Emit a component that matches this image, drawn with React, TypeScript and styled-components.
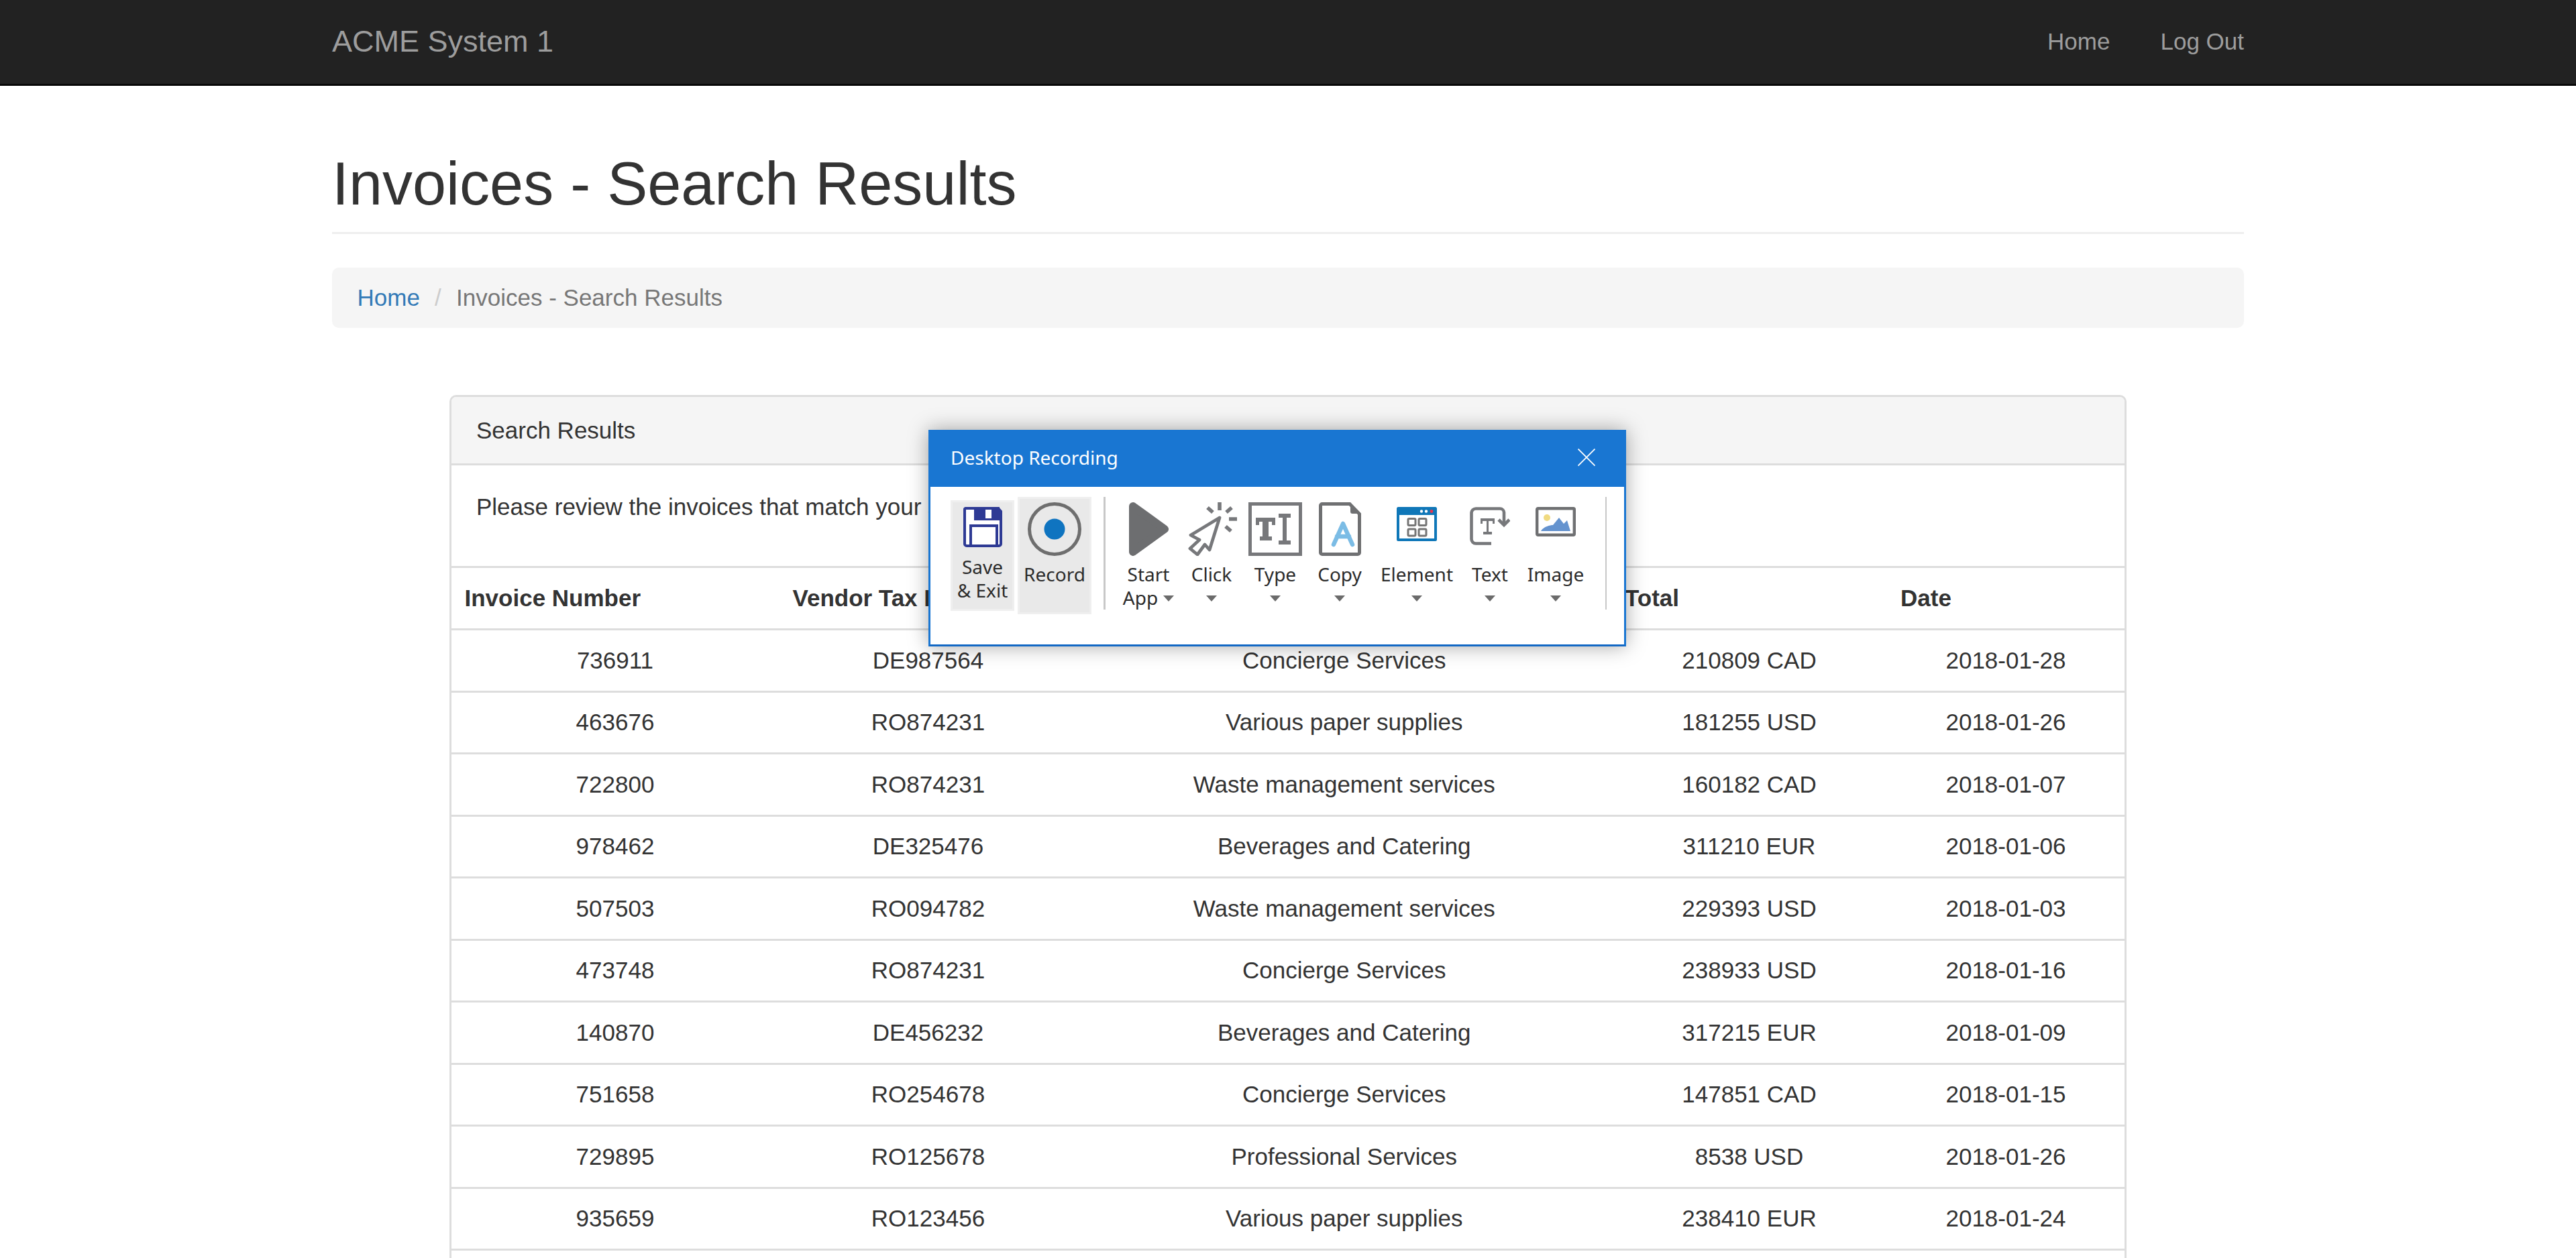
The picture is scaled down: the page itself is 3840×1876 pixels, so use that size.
import React from "react";
import styled, { createGlobalStyle } from "styled-components";

const Global = createGlobalStyle`
  html, body { margin: 0; padding: 0; height: 100%; overflow: hidden; background: #fff; }
  * { box-sizing: border-box; }
`;

const Page = styled.div`
  zoom: 2.5;
  width: 1536px;
  font-family: "Liberation Sans", Arial, sans-serif;
  font-size: 14px;
  line-height: 20px;
  color: #333;
`;
const Navbar = styled.nav`
  height: 51.2px;
  background: #222;
  border-bottom: 1.2px solid #080808;
`;
const NavInner = styled.div`
  width: 1170px;
  height: 49.6px;
  margin: 0 auto;
  padding: 0 15px;
  display: flex;
  align-items: center;
  justify-content: space-between;
  color: #9d9d9d;
`;
const Brand = styled.a`
  font-size: 18px;
  line-height: 20px;
  color: #9d9d9d;
`;
const NavLinks = styled.div`
  display: flex;
  gap: 30px;
`;
const NavLink = styled.a`
  color: #9d9d9d;
`;
const Container = styled.main`
  width: 1170px;
  margin: 0 auto;
  padding: 0 15px;
`;
const Header = styled.h1`
  margin: 38.6px 0 20px;
  padding-bottom: 9px;
  border-bottom: 1.2px solid #eee;
  font-size: 36px;
  font-weight: 500;
  line-height: 1.1;
  color: #333;
`;
const Breadcrumb = styled.ol`
  display: flex;
  list-style: none;
  margin: 0 0 40px;
  padding: 8px 15px;
  background: #f5f5f5;
  border-radius: 4px;
`;
const Crumb = styled.li`
  color: #777;
`;
const CrumbLink = styled.a`
  color: #337ab7;
`;
const CrumbSep = styled.li`
  color: #ccc;
  padding: 0 5px;
  white-space: pre;
`;
const Panel = styled.section`
  width: 1000px;
  margin: 0 auto;
  border: 1.2px solid #ddd;
  border-radius: 4px;
  overflow: hidden;
`;
const PanelHeading = styled.div`
  padding: 9.8px 15px 9.8px 14.8px;
  background: #f5f5f5;
  border-bottom: 1.2px solid #ddd;
`;
const PanelBody = styled.div`
  padding: 14.8px 15px 15.2px 14.8px;
`;
const Lead = styled.p`
  margin: 0 0 10px;
`;
const Table = styled.table`
  width: calc(100% + 0.2px);
  margin-left: -0.2px;
  table-layout: fixed;
  border-collapse: separate;
  border-spacing: 0;
`;
const Th = styled.th`
  padding: 8px;
  text-align: left;
  font-weight: 700;
  border-top: 1.2px solid #ddd;
  white-space: nowrap;
`;
const Td = styled.td`
  padding: 7.8px 8px 8px;
  text-align: center;
  border-top: 1.2px solid #ddd;
`;

const Popup = styled.aside`
  position: absolute;
  left: 1384px;
  top: 641px;
  width: 1040px;
  height: 323px;
  background: #fff;
  border: 3px solid #1976d2;
  border-bottom-color: #1268c4;
  box-shadow: 0 0 28px rgba(0, 0, 0, 0.35);
  font-family: "Noto Sans", "Open Sans", sans-serif;
  color: #2b2b2b;
  display: flex;
  flex-direction: column;
`;
const TitleBar = styled.header`
  height: 82px;
  flex: none;
  background: #1976d2;
  color: #fff;
  font-size: 28px;
  display: flex;
  align-items: center;
  justify-content: space-between;
  padding: 0 43px 6px 30px;
`;
const Toolbar = styled.div`
  display: flex;
  align-items: flex-start;
  padding: 15px 0 0 30px;
`;
const ActionButton = styled.div<{ $w: number; $h: number; $pad: number; $top: number }>`
  width: ${(p) => p.$w}px;
  height: ${(p) => p.$h}px;
  margin: ${(p) => p.$top}px 5px 0 0;
  padding-top: ${(p) => p.$pad}px;
  background: #e9e9e9;
  border: 3px solid #efefef;
  display: flex;
  flex-direction: column;
  align-items: center;
  flex: none;
`;
const Label = styled.div<{ $gap?: number }>`
  font-size: 28px;
  line-height: 35px;
  margin-top: ${(p) => p.$gap ?? 0}px;
  text-align: center;
  white-space: nowrap;
`;
const Separator = styled.div<{ $left: number; $w: number }>`
  width: ${(p) => p.$w}px;
  height: 168px;
  margin-left: ${(p) => p.$left}px;
  background: #c8c8c8;
  flex: none;
`;
const Tools = styled.div`
  display: flex;
  margin-left: 16px;
  height: 168px;
`;
const Tool = styled.div<{ $w: number }>`
  width: ${(p) => p.$w}px;
  padding-top: 8px;
  display: flex;
  flex-direction: column;
  align-items: center;
  flex: none;
`;
const IconSlot = styled.div<{ $top?: number }>`
  height: 80px;
  padding-top: ${(p) => p.$top ?? 0}px;
  display: flex;
  align-items: flex-start;
  justify-content: center;
  flex: none;
`;
const CaretLine = styled.div`
  height: 35px;
  display: flex;
  align-items: center;
  justify-content: center;
  gap: 8px;
  font-size: 28px;
  line-height: 35px;
`;
const Caret = styled.span`
  display: block;
  width: 0;
  height: 0;
  margin-top: 1px;
  border-left: 8px solid transparent;
  border-right: 8px solid transparent;
  border-top: 9px solid #6b6b6b;
`;
const Svg = styled.svg`
  display: block;
  flex: none;
`;
const ClickSvg = styled(Svg)`
  margin-left: 8px;
`;

const rows = [
  ["736911", "DE987564", "Concierge Services", "210809 CAD", "2018-01-28"],
  ["463676", "RO874231", "Various paper supplies", "181255 USD", "2018-01-26"],
  ["722800", "RO874231", "Waste management services", "160182 CAD", "2018-01-07"],
  ["978462", "DE325476", "Beverages and Catering", "311210 EUR", "2018-01-06"],
  ["507503", "RO094782", "Waste management services", "229393 USD", "2018-01-03"],
  ["473748", "RO874231", "Concierge Services", "238933 USD", "2018-01-16"],
  ["140870", "DE456232", "Beverages and Catering", "317215 EUR", "2018-01-09"],
  ["751658", "RO254678", "Concierge Services", "147851 CAD", "2018-01-15"],
  ["729895", "RO125678", "Professional Services", "8538 USD", "2018-01-26"],
  ["935659", "RO123456", "Various paper supplies", "238410 EUR", "2018-01-24"],
];
const colWidths = [195.6, 177.6, 318.6, 164.4, 141.6];
const headers = ["Invoice Number", "Vendor Tax ID", "Description", "Total", "Date"];

const G = "#77787b";

const SaveIcon = () => (
  <Svg width={58} height={60} viewBox="0 0 58 60">
    <path d="M3 2h49l4 4.5V55a3 3 0 0 1-3 3H5a3 3 0 0 1-3-3V3z" fill="#fff" stroke="#2e3a94" strokeWidth="4" strokeLinejoin="round" />
    <path d="M16 0h38v20H16z" fill="#2e3a94" />
    <path d="M33 4h9v13h-9z" fill="#fff" />
    <path d="M11 58V28h39v30" fill="none" stroke="#2e3a94" strokeWidth="4" />
  </Svg>
);
const RecordIcon = () => (
  <Svg width={80} height={80} viewBox="0 0 80 80">
    <circle cx="40" cy="40" r="37.5" fill="none" stroke="#6e6e6e" strokeWidth="5" />
    <circle cx="40" cy="40" r="15.5" fill="#0f74c0" />
  </Svg>
);
const PlayIcon = () => (
  <Svg width={59} height={80} viewBox="0 0 59 80">
    <path d="M6 6 53 40 6 74Z" fill="#6d6e70" stroke="#6d6e70" strokeWidth="12" strokeLinejoin="round" />
  </Svg>
);
const ClickIcon = () => (
  <ClickSvg width={80} height={80} viewBox="10 9 80 80" fill="none" stroke={G}>
    <path d="M58 32 15 58l13 7-14 13 11 9 11-15 7 8Z" strokeWidth="4.8" strokeLinejoin="round" />
    <path d="M58 9v12M40 17l8 7M76 17l-8 7M72 34h12M67 45l8 7" strokeWidth="5.6" />
  </ClickSvg>
);
const TypeIcon = () => (
  <Svg width={80} height={80} viewBox="0 0 80 80" fill={G}>
    <path fillRule="evenodd" d="M0 0h80v80H0Zm5 5v70h70V5Z" />
    <path d="M11 23h29v11h-5v-5h-5v22h5v6H17v-6h4V29h-5v5h-5Z" />
    <path d="M45 17h18v6h-6v34h6v6H45v-6h6V23h-6Z" />
  </Svg>
);
const CopyIcon = () => (
  <Svg width={63} height={80} viewBox="0 0 63 80" fill="none">
    <path d="M5 2.500h41l14.500 15V75a2.500 2.500 0 0 1-2.500 2.500H5A2.500 2.500 0 0 1 2.500 75V5A2.500 2.500 0 0 1 5 2.500Z" stroke="#6f7072" strokeWidth="5" />
    <path d="M47 1 62 16v1H50a3 3 0 0 1-3-3Z" fill="#6f7072" />
    <path d="M22 63 36 32l14 31M27 51h18" stroke="#7bbce5" strokeWidth="6.5" strokeLinecap="round" strokeLinejoin="round" />
  </Svg>
);
const ElementIcon = () => (
  <Svg width={60} height={51} viewBox="0 0 60 51">
    <rect width="60" height="51" rx="2.500" fill="#0f77b8" />
    <rect x="4" y="12" width="52" height="35" fill="#fff" />
    <circle cx="37" cy="6.500" r="2.200" fill="#fff" />
    <circle cx="44" cy="6.500" r="2.200" fill="#fff" />
    <circle cx="52" cy="6.500" r="2.400" fill="#e8354f" />
    <g fill="none" stroke="#757575" strokeWidth="3">
      <rect x="17" y="17.500" width="11" height="10" rx="1.500" />
      <rect x="33" y="17.500" width="11" height="10" rx="1.500" />
      <rect x="17" y="33" width="11" height="10" rx="1.500" />
      <rect x="33" y="33" width="11" height="10" rx="1.500" />
    </g>
  </Svg>
);
const TextIcon = () => (
  <Svg width={60} height={57} viewBox="0 0 60 57">
    <path d="M32 54.500H9a6.500 6.500 0 0 1-6.500-6.500V9A6.500 6.500 0 0 1 9 2.500h36a6 6 0 0 1 6 6V25" fill="none" stroke={G} strokeWidth="4.600" />
    <path d="M43 19l8 8 8-8" fill="none" stroke={G} strokeWidth="4.600" />
    <path d="M16 17h21v8h-3v-4h-6v16h5v4H20v-4h5V21h-6v4h-3Z" fill={G} />
  </Svg>
);
const ImageIcon = () => (
  <Svg width={60} height={44} viewBox="0 0 60 44">
    <rect x="2.200" y="2.200" width="55.600" height="39.600" rx="1.500" fill="#fff" stroke="#6f7072" strokeWidth="4.400" />
    <circle cx="17" cy="16" r="5" fill="#f0da80" />
    <path d="M8 36c4-7 14-9 18-9l9-11 7 9 5-5 5 16Z" fill="#6493cf" />
  </Svg>
);
const CloseIcon = () => (
  <Svg width={26} height={26} viewBox="0 0 26 26">
    <path d="M.5.500 25.500 25.500M25.500.500.500 25.500" stroke="#fff" strokeWidth="1.800" />
  </Svg>
);

const tools = [
  { w: 92, label: "Click", icon: <ClickIcon /> },
  { w: 98, label: "Type", icon: <TypeIcon /> },
  { w: 94, label: "Copy", icon: <CopyIcon /> },
  { w: 136, label: "Element", icon: <ElementIcon />, top: 7 },
  { w: 82, label: "Text", icon: <TextIcon />, top: 7 },
  { w: 114, label: "Image", icon: <ImageIcon />, top: 7 },
];

export default function App() {
  return (
    <>
      <Global />
      <Page>
        <Navbar>
          <NavInner>
            <Brand>ACME System 1</Brand>
            <NavLinks>
              <NavLink>Home</NavLink>
              <NavLink>Log Out</NavLink>
            </NavLinks>
          </NavInner>
        </Navbar>
        <Container>
          <Header>Invoices - Search Results</Header>
          <Breadcrumb>
            <Crumb>
              <CrumbLink>Home</CrumbLink>
            </Crumb>
            <CrumbSep> / </CrumbSep>
            <Crumb>Invoices - Search Results</Crumb>
          </Breadcrumb>
          <Panel>
            <PanelHeading>Search Results</PanelHeading>
            <PanelBody>
              <Lead>Please review the invoices that match your search criteria.</Lead>
            </PanelBody>
            <Table>
              <colgroup>
                {colWidths.map((w, i) => (
                  <col key={i} style={{ width: w }} />
                ))}
              </colgroup>
              <thead>
                <tr>
                  {headers.map((h) => (
                    <Th key={h}>{h}</Th>
                  ))}
                </tr>
              </thead>
              <tbody>
                {rows.map((r) => (
                  <tr key={r[0]}>
                    {r.map((c, i) => (
                      <Td key={i}>{c}</Td>
                    ))}
                  </tr>
                ))}
                <tr>
                  <Td colSpan={5}>&nbsp;</Td>
                </tr>
              </tbody>
            </Table>
          </Panel>
        </Container>
      </Page>
      <Popup>
        <TitleBar>
          <span>Desktop Recording</span>
          <CloseIcon />
        </TitleBar>
        <Toolbar>
          <ActionButton $w={95} $h={165} $pad={7} $top={5}>
            <SaveIcon />
            <Label $gap={12}>
              Save
              <br />
              &amp; Exit
            </Label>
          </ActionButton>
          <ActionButton $w={110} $h={175} $pad={5} $top={0}>
            <RecordIcon />
            <Label $gap={10}>Record</Label>
          </ActionButton>
          <Separator $left={13} $w={3} />
          <Tools>
            <Tool $w={96}>
              <IconSlot>
                <PlayIcon />
              </IconSlot>
              <Label $gap={10}>Start</Label>
              <CaretLine>
                App
                <Caret />
              </CaretLine>
            </Tool>
            {tools.map((t) => (
              <Tool key={t.label} $w={t.w}>
                <IconSlot $top={t.top}>{t.icon}</IconSlot>
                <Label $gap={10}>{t.label}</Label>
                <CaretLine>
                  <Caret />
                </CaretLine>
              </Tool>
            ))}
          </Tools>
          <Separator $left={17} $w={2} />
        </Toolbar>
      </Popup>
    </>
  );
}
